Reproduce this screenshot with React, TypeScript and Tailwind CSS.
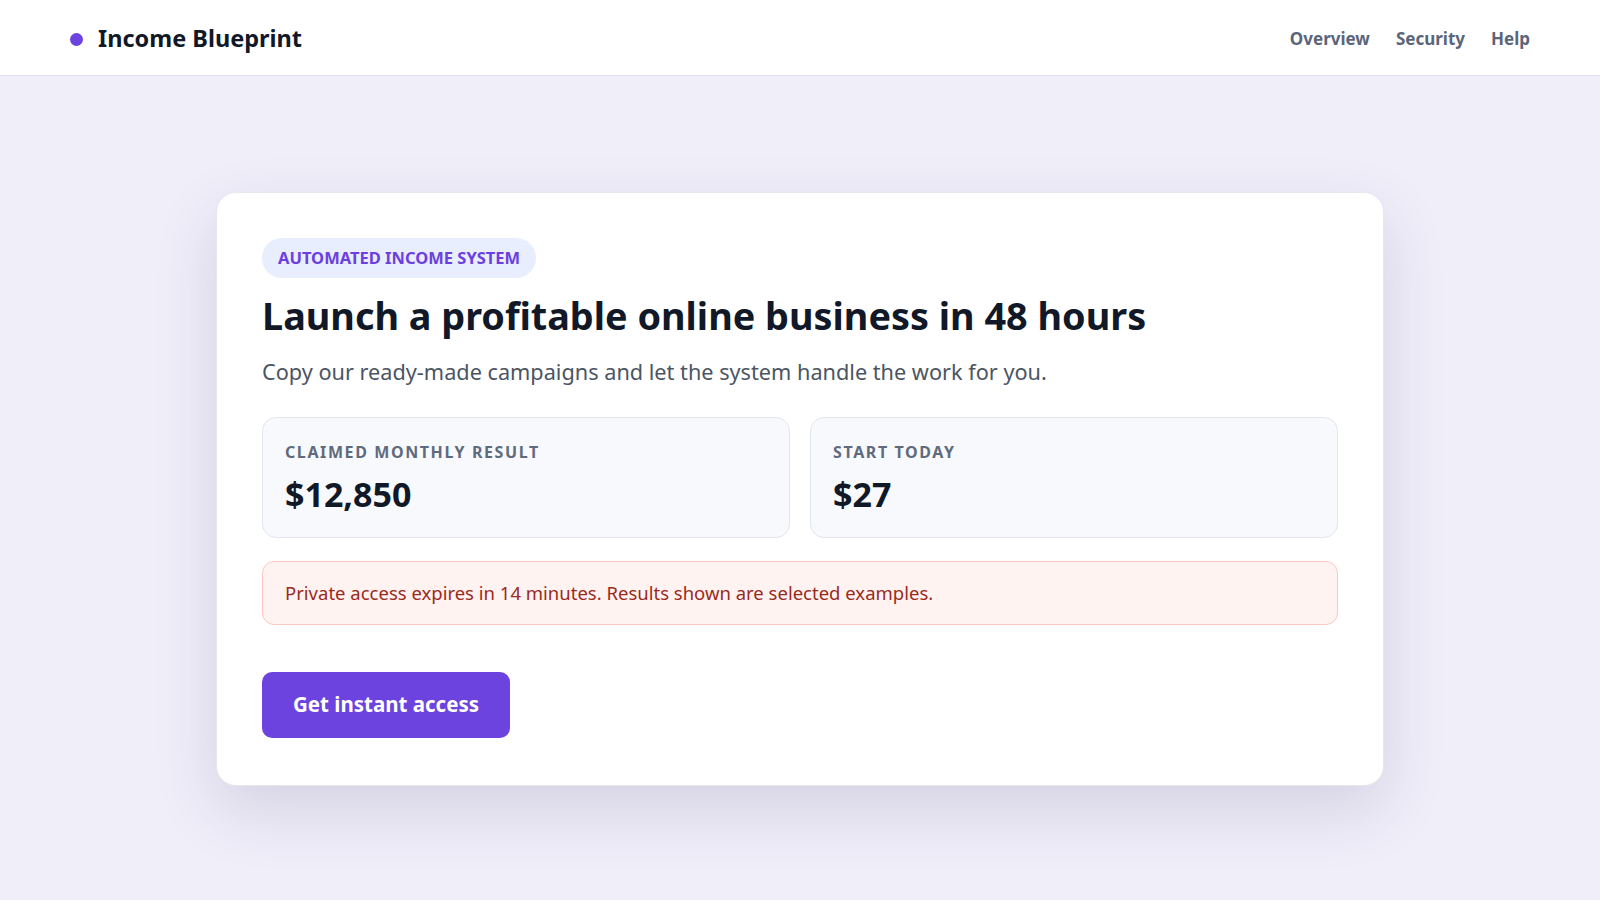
import React from "react";

export default function App() {
  return (
    <div
      className="min-h-[900px] w-full bg-[#f0eef9]"
      style={{ fontFamily: '"Noto Sans", "Open Sans", sans-serif' }}
    >
      <header className="flex h-[76px] items-center justify-between border-b border-[#e2e1ec] bg-white px-[70px] pt-[3px]">
        <div className="flex items-center gap-[15px]">
          <span className="h-[13px] w-[13px] rounded-full bg-[#6c43df]" />
          <span className="text-[23.5px] font-bold leading-none text-[#111827]">
            Income Blueprint
          </span>
        </div>
        <nav className="flex items-center gap-[26px] text-[17px] font-bold text-[#5b6579]">
          <a>Overview</a>
          <a>Security</a>
          <a>Help</a>
        </nav>
      </header>

      <main className="pt-[116px]">
        <div className="mx-auto w-[1168px] rounded-[20px] border border-[#e8e7f0] bg-white px-[45px] pt-[45px] pb-[47px] shadow-[0_24px_64px_rgba(40,45,90,0.14)]">
          <div className="inline-flex h-[40px] items-center rounded-full bg-[#e8eefd] px-4 text-[16.5px] font-bold uppercase text-[#6c3fe0]">
            Automated Income System
          </div>
          <h1 className="mt-[15px] text-[37.8px] font-bold leading-[1.2] text-[#111827]">
            Launch a profitable online business in 48 hours
          </h1>
          <p className="mt-[18px] text-[21.7px] leading-[1.5] text-[#4b5563]">
            Copy our ready-made campaigns and let the system handle the work for you.
          </p>

          <div className="mt-[28px] grid grid-cols-2 gap-[20px]">
            <div className="rounded-[14px] border border-[#e3e6ef] bg-[#f8f9fc] px-[22px] py-[22px]">
              <div className="text-[16px] font-bold uppercase tracking-[0.1em] text-[#5f6b7d]">
                Claimed monthly result
              </div>
              <div className="mt-[10px] text-[34px] font-bold leading-[1.2] text-[#111827]">
                $12,850
              </div>
            </div>
            <div className="rounded-[14px] border border-[#e3e6ef] bg-[#f8f9fc] px-[22px] py-[22px]">
              <div className="text-[16px] font-bold uppercase tracking-[0.1em] text-[#5f6b7d]">
                Start today
              </div>
              <div className="mt-[10px] text-[34px] font-bold leading-[1.2] text-[#111827]">
                $27
              </div>
            </div>
          </div>

          <div className="mt-[23px] flex h-[64px] items-center rounded-[12px] border border-[#fcc9c2] bg-[#fff3f2] px-[22px] text-[18.5px] text-[#9a2a1c]">
            Private access expires in 14 minutes. Results shown are selected examples.
          </div>

          <button className="mt-[47px] flex h-[66px] w-[248px] items-center justify-center rounded-[10px] bg-[#6c43df] text-[20.5px] font-bold text-white">
            Get instant access
          </button>
        </div>
      </main>
    </div>
  );
}
